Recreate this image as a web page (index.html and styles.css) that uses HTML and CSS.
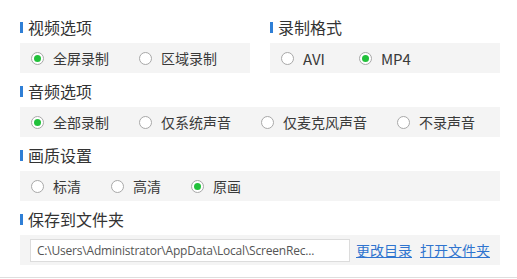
FILE: index.html
```html
<!DOCTYPE html>
<html lang="zh-CN">

<head>
  <meta charset="UTF-8">
  <title>录制设置</title>
  <link rel="stylesheet" href="styles.css">
</head>

<body>
  <div class="panel">
    <div class="row-two">
      <div class="section">
        <div class="title">视频选项</div>
        <div class="box">
          <label class="option"><span class="radio checked"></span>全屏录制</label>
          <label class="option"><span class="radio"></span>区域录制</label>
        </div>
      </div>
      <div class="section">
        <div class="title">录制格式</div>
        <div class="box">
          <label class="option latin"><span class="radio"></span>AVI</label>
          <label class="option latin"><span class="radio checked"></span>MP4</label>
        </div>
      </div>
    </div>

    <div class="section">
      <div class="title">音频选项</div>
      <div class="box">
        <label class="option"><span class="radio checked"></span>全部录制</label>
        <label class="option"><span class="radio"></span>仅系统声音</label>
        <label class="option"><span class="radio"></span>仅麦克风声音</label>
        <label class="option"><span class="radio"></span>不录声音</label>
      </div>
    </div>

    <div class="section">
      <div class="title">画质设置</div>
      <div class="box">
        <label class="option"><span class="radio"></span>标清</label>
        <label class="option"><span class="radio"></span>高清</label>
        <label class="option"><span class="radio checked"></span>原画</label>
      </div>
    </div>

    <div class="section">
      <div class="title">保存到文件夹</div>
      <div class="box path-box">
        <div class="path">C:\Users\Administrator\AppData\Local\ScreenRec...</div>
        <a class="link" href="#">更改目录</a>
        <a class="link" href="#">打开文件夹</a>
      </div>
    </div>
  </div>
</body>

</html>
```

FILE: styles.css
```css
body {
  margin: 0;
  background: #ffffff;
  font-family: "Noto Sans CJK SC", "Noto Sans", sans-serif;
  color: #333333;
}

.panel {
  height: 260px;
  padding: 17px 17px 0 20px;
  border-bottom: 1px solid #dedede;
}

.row-two {
  display: grid;
  grid-template-columns: 230px 230px;
  column-gap: 20px;
}

.section {
  margin-bottom: 8px;
}

.title {
  display: flex;
  align-items: center;
  height: 20px;
  margin-bottom: 6px;
  font-size: 16px;
  line-height: 20px;
  color: #333333;
}

.title::before {
  content: "";
  width: 3px;
  height: 11px;
  margin-right: 5px;
  background: #2f7fd6;
}

.box {
  display: flex;
  align-items: center;
  height: 30px;
  padding-left: 11px;
  background: #f4f4f4;
}

.option {
  display: flex;
  flex-shrink: 0;
  align-items: center;
  margin-right: 30px;
  font-size: 14px;
  color: #3a3a3a;
  white-space: nowrap;
  cursor: pointer;
}

.option.latin {
  margin-right: 34px;
  font-size: 15px;
}

.radio {
  position: relative;
  box-sizing: border-box;
  width: 13px;
  height: 13px;
  margin-right: 9px;
  border: 1px solid #a8a8a8;
  border-radius: 50%;
  background: #ffffff;
}

.radio.checked::after {
  content: "";
  position: absolute;
  left: 2px;
  top: 2px;
  width: 7px;
  height: 7px;
  border-radius: 50%;
  background: #22c13b;
}

.path-box {
  padding-left: 10px;
}

.path {
  box-sizing: border-box;
  flex-shrink: 0;
  width: 320px;
  height: 23px;
  margin-right: 6px;
  padding: 0 6px;
  border: 1px solid #dcdcdc;
  background: #ffffff;
  font-family: "Open Sans", sans-serif;
  font-size: 12px;
  letter-spacing: -0.2px;
  line-height: 21px;
  color: #555555;
  white-space: nowrap;
  overflow: hidden;
}

.link {
  flex-shrink: 0;
  margin-right: 8px;
  font-size: 14px;
  color: #2f74cf;
  text-decoration: underline;
}
```
